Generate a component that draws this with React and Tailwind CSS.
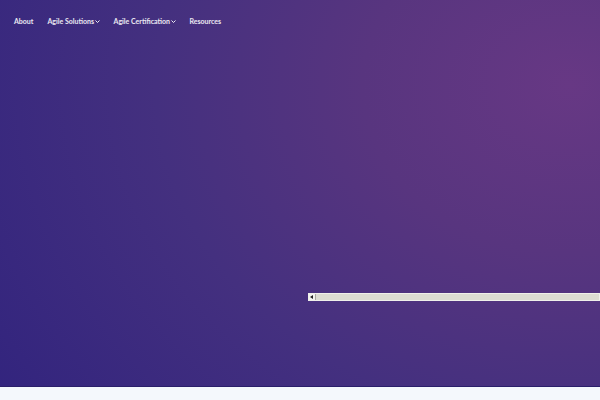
export default function App() {
  const nav = [
    { label: 'About' },
    { label: 'Agile Solutions', caret: true },
    { label: 'Agile Certification', caret: true },
    { label: 'Resources' },
  ];

  return (
    <div className="w-[600px] h-[400px] flex flex-col bg-[#f4f8fc] font-['Lato',sans-serif]">
      <div className="h-[387px] flex flex-col bg-[radial-gradient(ellipse_115%_145%_at_95%_22%,#673884_0%,#58357f_30%,#44307f_60%,#32247e_100%)] border-b border-[#2a1f6a]">
        {/* Nav */}
        <nav className="flex items-center gap-[14px] pl-[14px] pt-[16px] text-[7px] font-bold text-white/90">
          {nav.map(n => (
            <span key={n.label} className="flex items-center">
              {n.label}
              {n.caret && (
                <svg className="w-[5px] h-[5px] ml-[0.5px]" viewBox="0 0 10 10" fill="none" stroke="currentColor" strokeWidth={2}>
                  <path d="M1 3l4 4 4-4" />
                </svg>
              )}
            </span>
          ))}
        </nav>

        <div className="flex-1" />

        {/* scrollbar */}
        <div className="flex ml-[308px] h-[8px] mb-[85px] border border-[#f0f0ea] bg-[#dcdcd2]">
          <div className="w-[7px] h-full bg-[#f3f3ee] flex items-center justify-center border-r border-[#a9a9a0]">
            <svg className="w-[4px] h-[4px]" viewBox="0 0 4 4"><path d="M3 0v4L0 2z" fill="#222" /></svg>
          </div>
          <div className="flex-1" />
        </div>
      </div>
    </div>
  );
}
